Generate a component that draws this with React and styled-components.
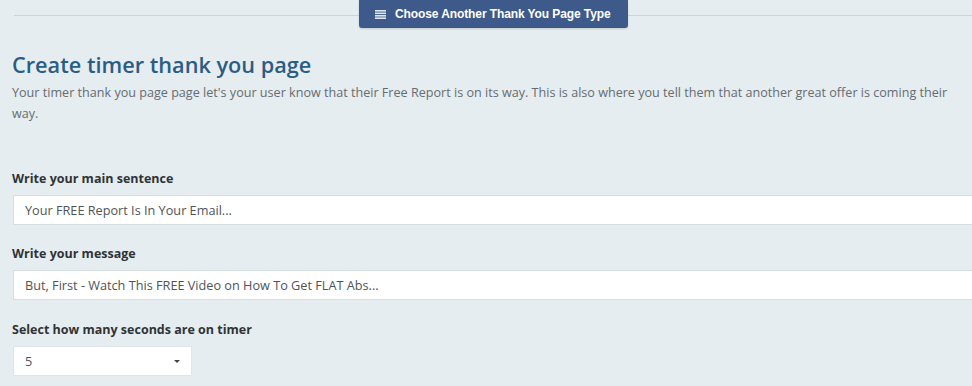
import React from 'react';
import styled, { createGlobalStyle } from 'styled-components';

const GlobalStyle = createGlobalStyle`
  body {
    margin: 0;
    background: #e5edf0;
    font-family: "Open Sans", "Liberation Sans", sans-serif;
  }
`;

const Page = styled("div")`
  width: 972px;
  height: 386px;
  overflow: hidden;
  padding-left: 13px;
  box-sizing: border-box;
`;

const TopBar = styled("div")`
  display: flex;
  justify-content: center;
  margin-left: 1px;
  margin-right: -1px;
  background: linear-gradient(#ccd5da, #ccd5da) 0 15px / 100% 1px no-repeat;
`;

const SwitchButton = styled("button")`
  display: flex;
  align-items: center;
  gap: 9px;
  width: 269px;
  height: 28px;
  padding: 0 0 0 16px;
  border: none;
  border-radius: 0 0 3px 3px;
  background: #3d5a8b;
  color: #fff;
  font-family: "Liberation Sans", Arial, sans-serif;
  font-weight: bold;
  font-size: 12px;
  letter-spacing: -0.1px;
  box-shadow: 0 1px 2px rgba(0, 0, 0, 0.15);
  cursor: pointer;
`;

const Title = styled("h1")`
  margin: 22px 0 0 -1px;
  font-size: 21.7px;
  font-weight: 600;
  line-height: 30px;
  color: #2b5d84;
`;

const Intro = styled("p")`
  margin: 2px 0 0 -1px;
  font-size: 12.6px;
  line-height: 21px;
  color: #676c70;
`;

const Field = styled("div")`
  display: flex;
  flex-direction: column;
  margin-top: ${props => props.top}px;
`;

const Label = styled("label")`
  font-size: 12.5px;
  font-weight: 700;
  line-height: 18px;
  color: #2f3335;
  margin-bottom: 7px;
  margin-left: -1px;
`;

const TextInput = styled("input")`
  box-sizing: border-box;
  width: 980px;
  height: 30px;
  padding: 0 11px;
  border: 1px solid #d6dee1;
  border-right: none;
  background: #fff;
  font-family: inherit;
  font-size: 12.7px;
  color: #4f5457;
  outline: none;
`;

const SelectBox = styled("div")`
  box-sizing: border-box;
  display: flex;
  align-items: center;
  justify-content: space-between;
  width: 179px;
  height: 30px;
  padding: 0 11px;
  border: 1px solid #dfe6e9;
  background: #fff;
  font-size: 12.7px;
  color: #4f5457;
`;

const Caret = styled("span")`
  width: 0;
  height: 0;
  border-left: 3px solid transparent;
  border-right: 3px solid transparent;
  border-top: 3px solid #444;
`;

const ListIcon = () => (
  <svg width="11" height="9" viewBox="0 0 11 9">
    <rect x="0" y="0" width="11" height="1.6" fill="#fff" opacity="0.85" />
    <rect x="0" y="2.5" width="11" height="1.6" fill="#fff" opacity="0.85" />
    <rect x="0" y="5" width="11" height="1.6" fill="#fff" opacity="0.85" />
    <rect x="0" y="7.4" width="11" height="1.6" fill="#fff" opacity="0.85" />
  </svg>
);

export default function App() {
  return (
    <Page>
      <GlobalStyle />
      <TopBar>
        <SwitchButton>
          <ListIcon />
          Choose Another Thank You Page Type
        </SwitchButton>
      </TopBar>
      <Title>Create timer thank you page</Title>
      <Intro>
        Your timer thank you page page let's your user know that their Free Report is on its way. This is also where you tell them that another great offer is coming their way.
      </Intro>
      <Field top={46}>
        <Label>Write your main sentence</Label>
        <TextInput defaultValue="Your FREE Report Is In Your Email..." />
      </Field>
      <Field top={20}>
        <Label>Write your message</Label>
        <TextInput defaultValue="But, First - Watch This FREE Video on How To Get FLAT Abs..." />
      </Field>
      <Field top={21}>
        <Label>Select how many seconds are on timer</Label>
        <SelectBox>
          <span>5</span>
          <Caret />
        </SelectBox>
      </Field>
    </Page>
  );
}
